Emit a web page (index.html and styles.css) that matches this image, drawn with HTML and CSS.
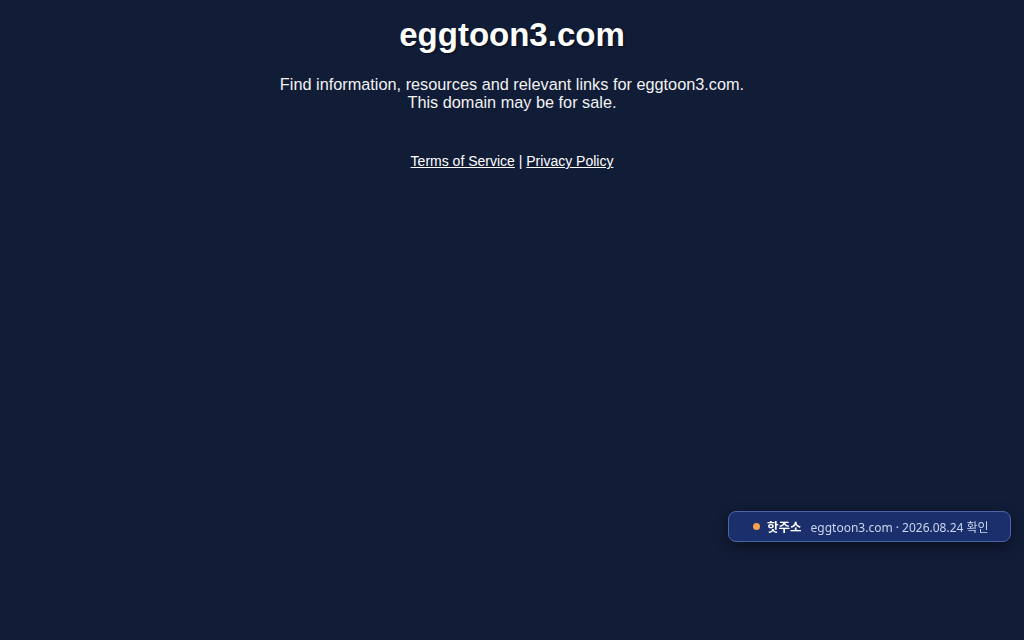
FILE: index.html
```html
<!DOCTYPE html>
<html lang="en">
<head>
<meta charset="utf-8">
<title>eggtoon3.com</title>
<link rel="stylesheet" href="styles.css">
</head>
<body>
<main class="page">
  <h1 class="title">eggtoon3.com</h1>
  <p class="lead">Find information, resources and relevant links for eggtoon3.com.<br>This domain may be for sale.</p>
  <p class="legal"><a href="#">Terms of Service</a> | <a href="#">Privacy Policy</a></p>
</main>
<div class="badge">
  <span class="dot"></span>
  <strong class="badge-label">핫주소</strong>
  <span class="badge-text">eggtoon3.com · 2026.08.24 확인</span>
</div>
</body>
</html>
```
FILE: styles.css
```css
html, body {
  margin: 0;
  padding: 0;
  height: 100%;
}
body {
  background: #111c37;
  color: #ffffff;
  font-family: "Liberation Sans", Arial, sans-serif;
}
.page {
  display: flex;
  flex-direction: column;
  align-items: center;
  text-align: center;
  padding-top: 16px;
}
.title {
  margin: 0;
  font-size: 33px;
  font-weight: bold;
  line-height: 38px;
  text-shadow: 1px 1px 2px rgba(0,0,0,0.6);
}
.lead {
  margin: 21px 0 0;
  font-size: 16.3px;
  line-height: 18px;
  color: #f2f2f2;
}
.legal {
  margin: 41px 0 0;
  font-size: 14px;
  line-height: 18px;
}
.legal a {
  color: #ffffff;
  text-decoration: underline;
}
.badge {
  position: fixed;
  right: 13px;
  bottom: 98px;
  width: 283px;
  height: 31px;
  box-sizing: border-box;
  display: flex;
  align-items: center;
  gap: 6px;
  padding-left: 24px;
  background: #1b2f6c;
  border: 1px solid #4a65a8;
  border-radius: 8px;
  box-shadow: 0 4px 14px rgba(0,0,0,0.45);
  font-family: "Noto Sans", "Noto Sans CJK KR", sans-serif;
  font-size: 12px;
  color: #c9d4ee;
}
.dot {
  width: 7px;
  height: 7px;
  border-radius: 50%;
  background: #f5a04a;
  margin-right: 1px;
}
.badge-label {
  font-family: "Noto Sans CJK KR", sans-serif;
  font-weight: bold;
  font-size: 12.5px;
  color: #ffffff;
  margin-right: 3px;
}
.badge-text {
  font-family: "Noto Sans", "Noto Sans CJK KR", sans-serif;
}
```
